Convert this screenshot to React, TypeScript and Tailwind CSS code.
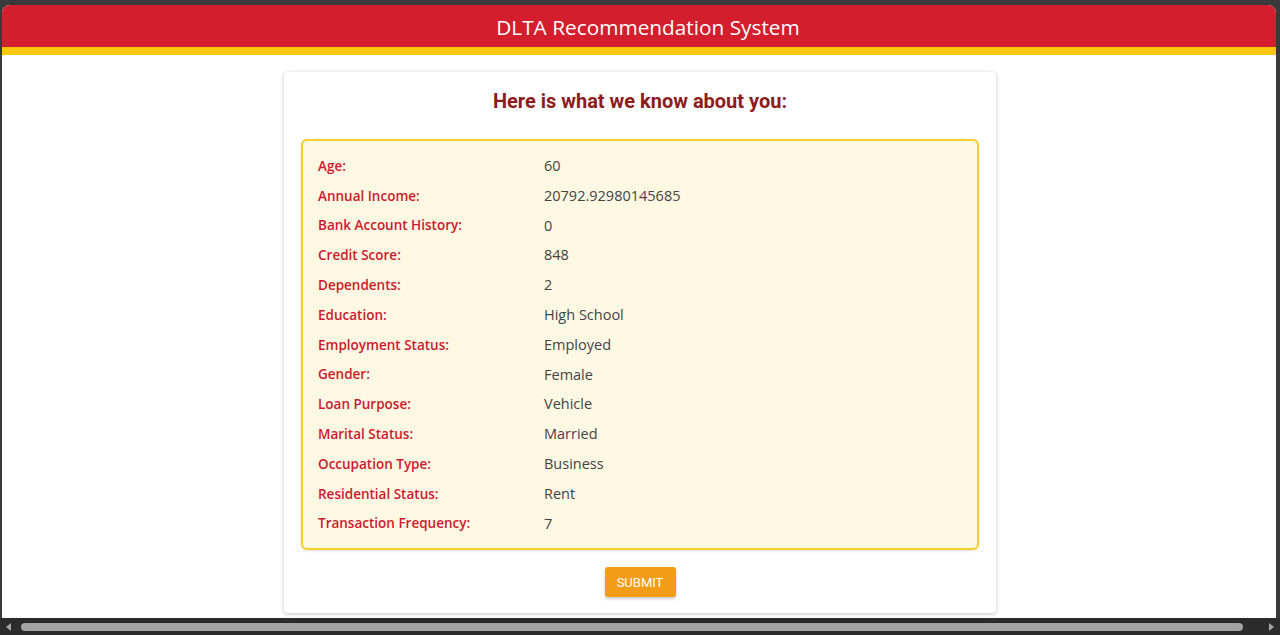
import React from "react";

const rows: [string, string][] = [
  ["Age:", "60"],
  ["Annual Income:", "20792.92980145685"],
  ["Bank Account History:", "0"],
  ["Credit Score:", "848"],
  ["Dependents:", "2"],
  ["Education:", "High School"],
  ["Employment Status:", "Employed"],
  ["Gender:", "Female"],
  ["Loan Purpose:", "Vehicle"],
  ["Marital Status:", "Married"],
  ["Occupation Type:", "Business"],
  ["Residential Status:", "Rent"],
  ["Transaction Frequency:", "7"],
];

export default function App() {
  return (
    <div className="w-[1280px] h-[635px] bg-[#3a3a3a] flex flex-col overflow-hidden">
      <div className="flex-1 flex flex-col pt-[5px] pl-[2px] pr-[4px]">
        <div className="flex-1 bg-white rounded-t-[8px] overflow-hidden flex flex-col">
          <div className="h-[42px] bg-[#d41d2d] flex items-center justify-center pt-[3px] pl-[18px]">
            <h1
              className="text-white text-[20.8px] leading-none"
              style={{ fontFamily: '"Open Sans", "Noto Sans", sans-serif' }}
            >
              DLTA Recommendation System
            </h1>
          </div>
          <div className="h-[8px] bg-[#fdc80c]" />
          <div className="flex justify-center pt-[17px] pl-[2px]">
            <div className="w-[712px] bg-white rounded-[4px] shadow-[0_1px_4px_rgba(0,0,0,0.25)] px-[17px] pt-[15px] pb-[16px] flex flex-col items-center">
              <h2
                className="text-[20px] leading-[28px] font-bold text-[#8e1b1b]"
                style={{ fontFamily: "Roboto, sans-serif" }}
              >
                Here is what we know about you:
              </h2>
              <div className="mt-[24px] w-full border-2 border-[#f7cd2e] bg-[#fff8e3] rounded-[6px] px-[15px] pt-[10px] pb-[10px] shadow-[0_1px_3px_rgba(0,0,0,0.12)]">
                {rows.map(([k, v]) => (
                  <div
                    key={k}
                    className="flex h-[29.8px] items-center"
                    style={{ fontFamily: '"Open Sans", "Noto Sans", sans-serif' }}
                  >
                    <div className="w-[226px] text-[13.5px] font-semibold text-[#cc1a2e]">{k}</div>
                    <div className="text-[14.5px] text-[#444444]">{v}</div>
                  </div>
                ))}
              </div>
              <button
                className="mt-[17px] w-[71px] h-[30px] bg-[#f39c16] text-white text-[13px] font-normal rounded-[3px] shadow-[0_2px_3px_rgba(0,0,0,0.2)]"
                style={{ fontFamily: "Roboto, sans-serif" }}
              >
                SUBMIT
              </button>
            </div>
          </div>
        </div>
      </div>
      <div className="h-[17px] bg-[#2b2b2b] flex items-center px-[4px] gap-[6px]">
        <svg width="10" height="10" viewBox="0 0 10 10">
          <path d="M7 1 L2 5 L7 9 Z" fill="#a3a3a3" />
        </svg>
        <div className="flex-1 h-[8px] rounded-full bg-[#a3a3a3] ml-[1px] mr-[17px]" />
        <svg width="10" height="10" viewBox="0 0 10 10">
          <path d="M3 1 L8 5 L3 9 Z" fill="#a3a3a3" />
        </svg>
      </div>
    </div>
  );
}
